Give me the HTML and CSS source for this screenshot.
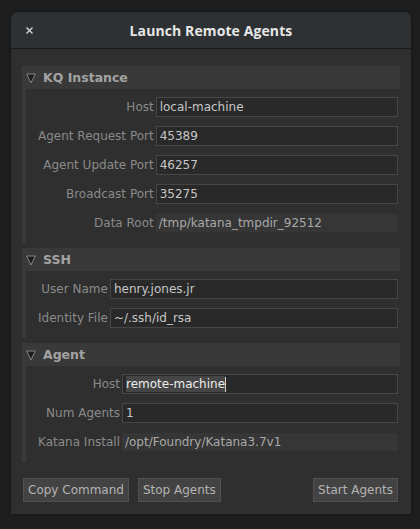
FILE: index.html
```html
<!DOCTYPE html>
<html>
<head>
<meta charset="utf-8">
<link rel="stylesheet" href="styles.css">
</head>
<body>
<div class="window">
  <div class="titlebar">
    <span class="close">
      <svg width="7" height="7" viewBox="0 0 7 7"><path d="M0.5 0.5L6.5 6.5M6.5 0.5L0.5 6.5" stroke="#d8d8d8" stroke-width="1.3"/></svg>
    </span>
    <span class="title">Launch Remote Agents</span>
  </div>
  <div class="content">
    <div class="group">
      <div class="group-head">
        <svg class="tri" width="10" height="11" viewBox="0 0 10 11"><polygon points="0.7,1 9.3,1 5,10" fill="#1d1d1d" stroke="#858585" stroke-width="1"/></svg>
        <span>KQ Instance</span>
      </div>
      <div class="group-body">
        <label class="lbl">Host</label><div class="field">local-machine</div>
        <label class="lbl">Agent Request Port</label><div class="field">45389</div>
        <label class="lbl">Agent Update Port</label><div class="field">46257</div>
        <label class="lbl">Broadcast Port</label><div class="field">35275</div>
        <label class="lbl">Data Root</label><div class="field readonly">/tmp/katana_tmpdir_92512</div>
      </div>
    </div>
    <div class="group">
      <div class="group-head">
        <svg class="tri" width="10" height="11" viewBox="0 0 10 11"><polygon points="0.7,1 9.3,1 5,10" fill="#1d1d1d" stroke="#858585" stroke-width="1"/></svg>
        <span>SSH</span>
      </div>
      <div class="group-body">
        <label class="lbl">User Name</label><div class="field">henry.jones.jr</div>
        <label class="lbl">Identity File</label><div class="field">~/.ssh/id_rsa</div>
      </div>
    </div>
    <div class="group">
      <div class="group-head">
        <svg class="tri" width="10" height="11" viewBox="0 0 10 11"><polygon points="0.7,1 9.3,1 5,10" fill="#1d1d1d" stroke="#858585" stroke-width="1"/></svg>
        <span>Agent</span>
      </div>
      <div class="group-body">
        <label class="lbl">Host</label><div class="field focus"><span class="sel">remote-machine</span><span class="caret"></span></div>
        <label class="lbl">Num Agents</label><div class="field">1</div>
        <label class="lbl">Katana Install</label><div class="field readonly">/opt/Foundry/Katana3.7v1</div>
      </div>
    </div>
    <div class="buttons">
      <button class="btn">Copy Command</button>
      <button class="btn">Stop Agents</button>
      <span class="spacer"></span>
      <button class="btn">Start Agents</button>
    </div>
  </div>
</div>
</body>
</html>
```
FILE: styles.css
```css
html, body {
  margin: 0;
  padding: 0;
  background: #1e1e1e;
}
body {
  padding: 12px 9px 15px 11px;
  font-family: "DejaVu Sans", sans-serif;
  font-size: 12px;
}
.window {
  width: 400px;
  background: #2f2f2f;
  border-radius: 7px 7px 0 0;
  box-shadow: 0 0 3px rgba(0,0,0,0.4);
}
.titlebar {
  height: 36px;
  background: #2d3133;
  border-bottom: 1px solid #181a1b;
  border-radius: 7px 7px 0 0;
  display: flex;
  align-items: center;
  justify-content: center;
  position: relative;
}
.close {
  position: absolute;
  left: 15px;
  top: 15px;
  display: flex;
}
.title {
  font-family: "Open Sans", sans-serif;
  font-weight: 700;
  font-size: 14px;
  color: #e6e6e6;
  letter-spacing: 0.1px;
}
.content {
  padding: 17px 11px 12px 11px;
  display: flex;
  flex-direction: column;
  gap: 5px;
}
.group-head {
  height: 23px;
  background: #393939;
  display: flex;
  align-items: center;
  gap: 7px;
  padding-left: 4px;
  font-weight: 700;
  color: #a3a3a3;
  font-size: 12.5px;
}
.tri {
  margin-top: 1px;
}
.group-body {
  border-left: 4px solid #393939;
  padding: 8px 2px 10px 12px;
  display: grid;
  grid-template-columns: max-content 1fr;
  column-gap: 2px;
  row-gap: 9px;
  align-items: center;
}
.lbl {
  text-align: right;
  color: #8a8a8a;
}
.field {
  height: 20px;
  box-sizing: border-box;
  background: #292929;
  border: 1px solid #464646;
  color: #c6c6c6;
  padding-left: 3px;
  line-height: 18px;
  display: flex;
  align-items: center;
  white-space: nowrap;
}
.field.readonly {
  height: 18px;
  margin: 1px 0;
  border: none;
  background: #363636;
  color: #a8a8a8;
  padding-left: 3px;
}
.sel {
  background: #454545;
  color: #eeeeee;
  line-height: 16px;
}
.caret {
  width: 1px;
  height: 15px;
  background: #d0d0d0;
}
.buttons {
  display: flex;
  gap: 9px;
  margin-top: 11px;
  padding: 0 2px 0 1px;
}
.spacer {
  flex: 1;
}
.btn {
  height: 24px;
  font-family: "DejaVu Sans", sans-serif;
  font-size: 12px;
  color: #b4b4b4;
  background: #434343;
  border: 1px solid #505050;
  padding: 0 4px;
  border-radius: 0;
}
```
